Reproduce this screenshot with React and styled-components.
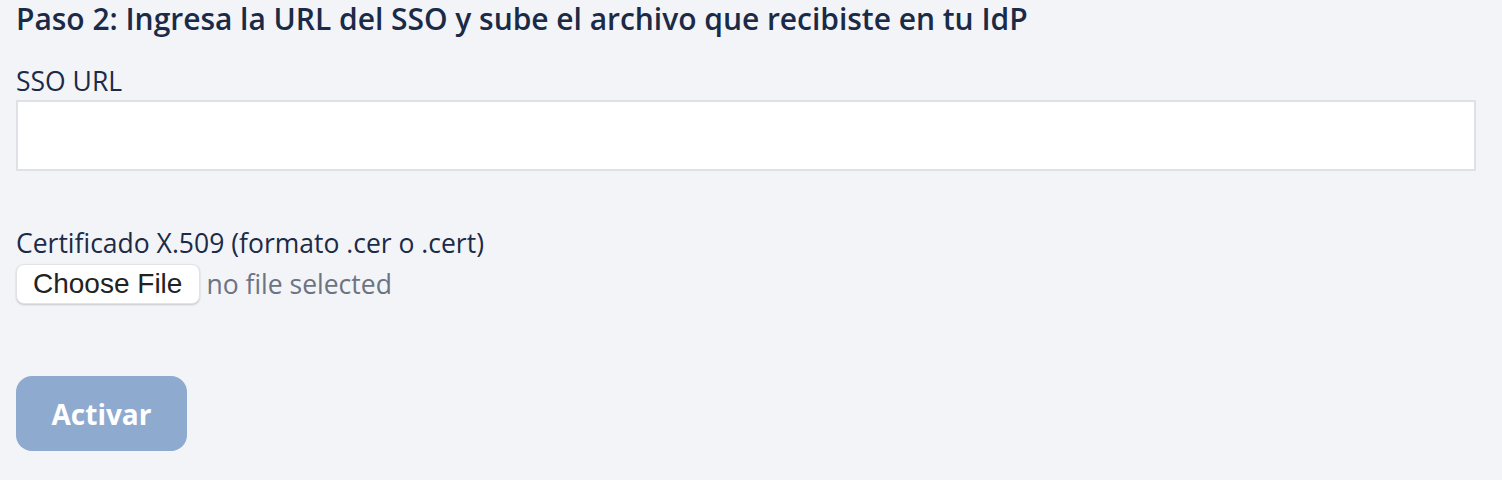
import React from 'react';
import styled, { createGlobalStyle } from 'styled-components';

const GlobalStyle = createGlobalStyle`
  html, body {
    margin: 0;
    padding: 0;
    background: #f3f4f8;
  }
  body {
    font-family: 'Open Sans', 'Noto Sans', sans-serif;
    color: #1b2b47;
  }
`;

const Page = styled.div`
  padding: 0 16px;
  width: 1460px;
`;

const Title = styled.h2`
  margin: 0;
  font-size: 30px;
  font-weight: 600;
  line-height: 38px;
  letter-spacing: -0.03px;
  color: #1b2b47;
`;

const Field = styled.div`
  display: flex;
  flex-direction: column;
  margin-top: ${({ $top }) => $top}px;
`;

const Label = styled.label`
  font-size: 26.5px;
  line-height: 37px;
  color: #1b2b47;
`;

const TextInput = styled.input`
  box-sizing: border-box;
  width: 100%;
  height: 71px;
  margin: 0;
  border: 2px solid #dfe1e7;
  background: #fff;
  font: inherit;
  font-size: 26px;
  padding: 0 16px;
  outline: none;
`;

const FileRow = styled.div`
  display: flex;
  align-items: center;
  gap: 6px;
  margin-top: 2px;
`;

const FileButton = styled.button`
  box-sizing: border-box;
  height: 40px;
  padding: 0 17px 0 16px;
  border: 1px solid #e2e3e6;
  border-radius: 8px;
  background: #fff;
  box-shadow: 0 1px 2px rgba(0, 0, 0, 0.18);
  font-family: 'Liberation Sans', Arial, sans-serif;
  font-size: 28px;
  color: #222;
  cursor: pointer;
`;

const FileStatus = styled.span`
  font-size: 26.5px;
  color: #6c7381;
`;

const SubmitButton = styled.button`
  box-sizing: border-box;
  margin-top: 72px;
  width: 171px;
  height: 75px;
  border: none;
  border-radius: 16px;
  background: #8eaacf;
  color: #fff;
  font-family: 'Open Sans', 'Noto Sans', sans-serif;
  font-size: 28px;
  font-weight: 700;
  cursor: not-allowed;
`;

export default function App() {
  return (
    <>
      <GlobalStyle />
      <Page>
        <Title>Paso 2: Ingresa la URL del SSO y sube el archivo que recibiste en tu IdP</Title>
        <Field $top={25}>
          <Label htmlFor="sso-url">SSO URL</Label>
          <TextInput id="sso-url" type="text" />
        </Field>
        <Field $top={54}>
          <Label>Certificado X.509 (formato .cer o .cert)</Label>
          <FileRow>
            <FileButton type="button">Choose File</FileButton>
            <FileStatus>no file selected</FileStatus>
          </FileRow>
        </Field>
        <SubmitButton type="button" disabled>Activar</SubmitButton>
      </Page>
    </>
  );
}
